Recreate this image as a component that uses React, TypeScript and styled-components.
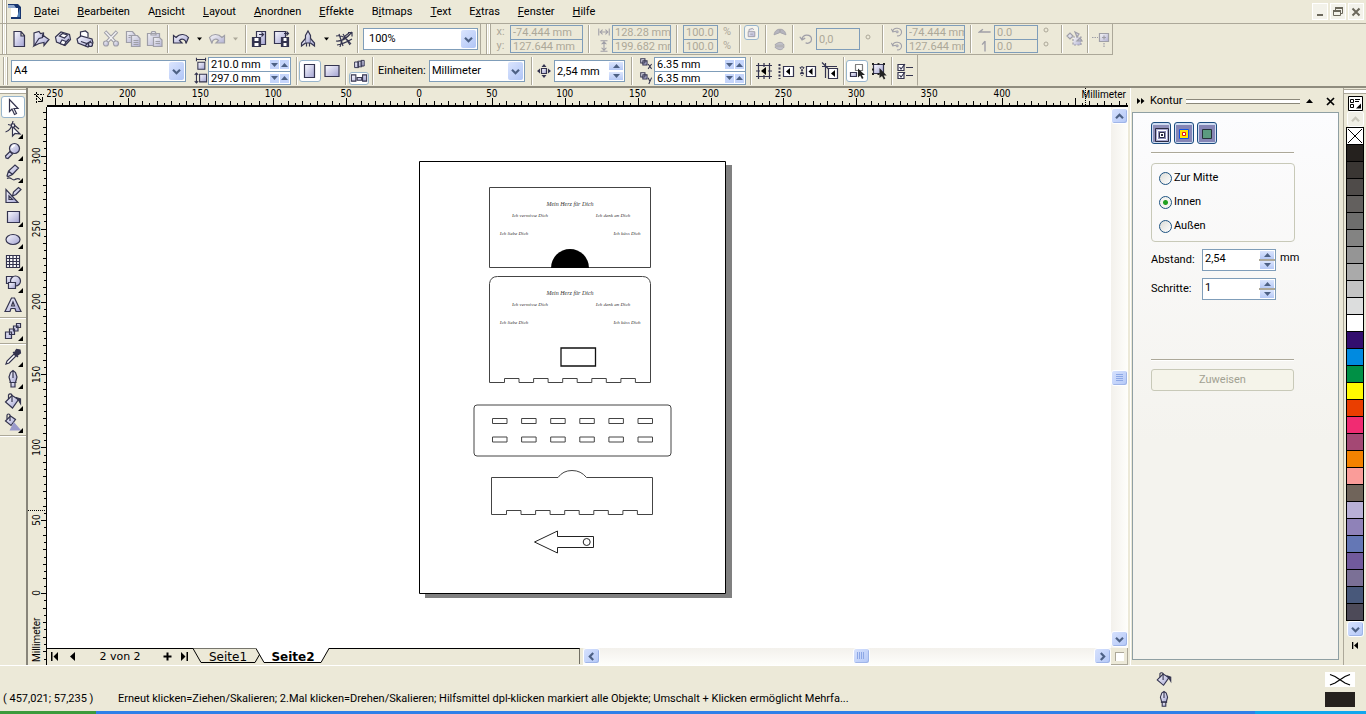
import React from "react";
import styled, { createGlobalStyle, css } from "styled-components";

const face = "#ece9d8";
const shade = "#aca899";
const fieldBorder = "#7f9db9";
const ui = 'Roboto, "Liberation Sans", sans-serif';

const GlobalStyle = createGlobalStyle`
  * { box-sizing: border-box; }
  body { margin: 0; background: ${face}; font: 11px/14px ${ui}; color: #000; }
  button, input, select { font: inherit; color: inherit; margin: 0; padding: 0; border: 0; background: none; min-width: 0; }
  svg { display: block; flex: none; }
  fieldset { margin: 0; padding: 0; min-width: 0; }
`;

/* ---------- shared parts ---------- */

const Window = styled.div`
  min-height: 100vh;
  display: flex;
  flex-direction: column;
  background: ${face};
  overflow: hidden;
`;

const Defs = styled.svg`
  position: absolute;
  width: 0;
  height: 0;
`;

const Bar = styled.div`
  display: flex;
  flex: none;
  height: 31px;
  background: ${face};
  white-space: nowrap;
`;

const Strip = styled.div<{ $bottom?: boolean }>`
  display: flex;
  align-items: center;
  flex: none;
  padding-top: ${(p) => (p.$bottom ? 0 : 2)}px;
  border-right: 1px solid ${shade};
  border-bottom: 1px solid ${(p) => (p.$bottom ? shade : "transparent")};
`;

const Grip = styled.div`
  width: 5px;
  flex: none;
  align-self: stretch;
  border-left: 1px solid ${shade};
  border-right: 1px solid ${shade};
  background: linear-gradient(90deg, #fff 1px, ${face} 1px, ${face} 2px, #fff 2px);
`;

const Sep = styled.div<{ $l?: number; $r?: number }>`
  width: 2px;
  height: 28px;
  flex: none;
  margin: 0 ${(p) => p.$r ?? 1}px 0 ${(p) => p.$l ?? 1}px;
  border-left: 1px solid ${shade};
  border-right: 1px solid #fff;
`;

const ToolButton = styled.button<{ $active?: boolean; $w?: number }>`
  position: relative;
  display: flex;
  align-items: center;
  justify-content: center;
  flex: none;
  width: ${(p) => p.$w ?? 22}px;
  height: 22px;
  ${(p) =>
    p.$active &&
    css`
      background: #fff;
      border: 1px solid #98b5cc;
      border-radius: 3px;
    `}
`;

const LockButton = styled(ToolButton)`
  height: 15px;
  background: #f6f5ee;
`;

const MiniButton = styled.button<{ $active?: boolean }>`
  display: flex;
  align-items: center;
  justify-content: center;
  width: ${(p) => (p.$active ? 20 : 18)}px;
  height: 13px;
  ${(p) =>
    p.$active &&
    css`
      background: #fff;
      border: 1px solid #98b5cc;
      border-radius: 3px;
    `}
`;

const Stack = styled.div<{ $w: number; $top?: boolean }>`
  display: flex;
  flex-direction: column;
  align-items: center;
  justify-content: ${(p) => (p.$top ? "flex-start" : "space-around")};
  flex: none;
  width: ${(p) => p.$w}px;
  height: 28px;
  color: ${shade};
`;

const FieldBox = styled.div<{ $w: number; $off?: boolean }>`
  flex: none;
  width: ${(p) => p.$w}px;
  border: 1px solid ${fieldBorder};
  background: ${(p) => (p.$off ? face : "#fff")};
  color: ${(p) => (p.$off ? shade : "#000")};
`;

const FieldRow = styled.div`
  display: flex;
  align-items: center;
  height: 13px;
  & + & {
    border-top: 1px solid ${fieldBorder};
  }
`;

const TextInput = styled.input<{ $up?: boolean }>`
  flex: 1;
  width: 100%;
  height: 100%;
  padding-left: 2px;
  padding-bottom: ${(p) => (p.$up ? 4 : 0)}px;
  outline: 0;
`;

const SpinSide = styled.button`
  display: flex;
  align-items: center;
  justify-content: center;
  width: 10px;
  height: 9px;
  background: #c5d5fb;
  border-right: 1px solid #fff;
`;

const SpinColumn = styled.div<{ $barred?: boolean }>`
  display: flex;
  flex-direction: column;
  justify-content: space-between;
  width: 16px;
  padding: 1px 1px;
  align-self: stretch;
  background: ${(p) => (p.$barred ? `linear-gradient(#fff 9px, ${shade} 9px, ${shade} 11px, #fff 11px)` : "#fff")};
`;

const SpinPart = styled.button`
  display: flex;
  align-items: center;
  justify-content: center;
  height: 8px;
  background: linear-gradient(#dbe5fd, #b6c9f6);
`;

const ComboBox = styled.div<{ $w: number }>`
  position: relative;
  flex: none;
  width: ${(p) => p.$w}px;
  height: 22px;
  border: 1px solid ${fieldBorder};
  background: #fff;
`;

const ComboSelect = styled.select<{ $pad: number }>`
  appearance: none;
  width: 100%;
  height: 100%;
  padding-left: ${(p) => p.$pad}px;
  outline: 0;
`;

const ComboArrow = styled.span`
  position: absolute;
  top: 1px;
  right: 1px;
  bottom: 1px;
  width: 15px;
  display: flex;
  align-items: center;
  justify-content: center;
  border-radius: 2px;
  background: linear-gradient(135deg, #dbe5fe, #b0c5f6);
  pointer-events: none;
`;

const Chevron = ({ dir = "down", color = "#4d6185" }: { dir?: "down" | "up" | "left" | "right"; color?: string }) => {
  const turn = { down: 0, left: 90, up: 180, right: 270 }[dir];
  return (
    <svg width="9" height="9" viewBox="0 0 9 9">
      <path d="M1 2.8 4.5 6.2 8 2.8" fill="none" stroke={color} strokeWidth="2.2" transform={`rotate(${turn} 4.5 4.5)`} />
    </svg>
  );
};

const Tri = ({ up, color = "#4d6185", w = 7 }: { up?: boolean; color?: string; w?: number }) => (
  <svg width={w} height="4" viewBox="0 0 7 4">
    <path d={up ? "M0 4 3.5 0 7 4z" : "M0 0 3.5 4 7 0z"} fill={color} />
  </svg>
);

function Combo({ w, label, value, id, pad = 2 }: { w: number; label: string; value: string; id?: string; pad?: number }) {
  return (
    <ComboBox $w={w}>
      <ComboSelect id={id} $pad={pad} aria-label={label} defaultValue={value}>
        <option>{value}</option>
      </ComboSelect>
      <ComboArrow>
        <Chevron />
      </ComboArrow>
    </ComboBox>
  );
}

function PairField({ w, off, items, spin }: { w: number; off?: boolean; spin?: boolean; items: [string, string][] }) {
  return (
    <FieldBox $w={w} $off={off}>
      {items.map(([label, value]) => (
        <FieldRow key={label}>
          <TextInput aria-label={label} defaultValue={value} disabled={off} />
          {spin && (
            <>
              <SpinSide aria-label={`${label} verringern`}>
                <Tri />
              </SpinSide>
              <SpinSide aria-label={`${label} erhöhen`}>
                <Tri up />
              </SpinSide>
            </>
          )}
        </FieldRow>
      ))}
    </FieldBox>
  );
}

/* ---------- icons ---------- */

const line = "#34344f";
const lav = "url(#lavender)";

const glyphs: Record<string, React.ReactNode> = {
  page: <path d="M5 2.500h7l3.500 4v11H5zM12 2.500v4.500h3.500" />,
  open: (
    <>
      <path d="M3 17V4l5-1.500 1.500 2 3-.5v4" />
      <path d="M3 17 8 9.500l3.500-1V6l6.500 4.500-5 6v-3L8 14.500z" />
    </>
  ),
  save: (
    <>
      <path d="M2.500 8 8 3l8.500 2.500 1 5-5.500 6L3.500 13z" />
      <path d="M6.500 7 9.500 4.500l5 1.500-3 3zM7 14.500l2-3.500 4 1.500-1.500 3.500z" fill="#fff" />
      <path d="M13 13l3-3" />
    </>
  ),
  print: (
    <>
      <path d="M5.500 8V3l5-1 2.500 2v4" fill="#fff" />
      <path d="M2 10l4-3 11 3 1 4-5 4-10-4z" />
      <path d="M6 12.500l6 2 4-2.500M10 17l3-3 4 2" />
      <circle cx="15.500" cy="15.500" r="2" />
    </>
  ),
  cut: (
    <>
      <path d="M4 2.500 14 13M16 2.500 6 13" strokeWidth="3.400" />
      <path d="M4.500 3 14 13M15.500 3 6 13" stroke="#f4f4fa" strokeWidth="1.400" />
      <circle cx="5" cy="14.500" r="2.500" />
      <circle cx="15" cy="14.500" r="2.500" />
    </>
  ),
  copy: (
    <>
      <path d="M3.500 2.500h6l2.500 3v8H3.500z" />
      <path d="M8.500 6.500h6l2.500 3v8H8.500zM10.500 11.500h5M10.500 13.500h5M10.500 15.500h5M5.500 6.500h3M5.500 8.500h2" />
    </>
  ),
  paste: (
    <>
      <path d="M2.500 4.500h12v12h-12zM6 4.500l1-2h3l1 2v1.500H6z" />
      <path d="M8.500 8.500h6l2.500 2.500v6.500H8.500zM10.500 12.500h4.500M10.500 14.500h4.500" />
    </>
  ),
  undo: <path d="M2.500 14V6.500L5 8.500C9 4 15 5 17.500 8.500L15 14.500c0-4-4-5.500-6.500-3l2.500 2.500z" />,
  redo: <path d="M17.500 14V6.500L15 8.500C11 4 5 5 2.500 8.500L5 14.500c0-4 4-5.500 6.500-3L9 14z" />,
  importer: (
    <>
      <path d="M7.500 2.500h9v13h-9z" />
      <path d="M3.500 8.500h8v9h-8z" fill="#34344f" />
      <path d="M5.500 9h4v3h-4zM5.500 14h4v3h-4z" fill="#fff" stroke="none" />
      <path d="M10 5.500h4.500M12.500 3.500l2 2-2 2" fill="none" />
    </>
  ),
  exporter: (
    <>
      <path d="M3.500 2.500h11v12h-11z" />
      <path d="M10.500 8.500h7v9h-7z" fill="#34344f" />
      <path d="M12.500 9h3v3h-3zM12.500 14h3v3h-3z" fill="#fff" stroke="none" />
      <path d="M13 4.500h4.500M15.500 2.500l2 2-2 2" fill="none" />
    </>
  ),
  rocket: (
    <>
      <path d="M7.500 14V6.500L10 2l2.500 4.500V14z" />
      <path d="M7.500 9.500 3.500 14v3l4-3M12.500 9.500l4 4.500v3l-4-3M8.500 14v3.500M11.500 14v3.500" />
    </>
  ),
  mesh: (
    <path
      d="M2 12c6 1 11-3 16-9M3 16c6-1 10-3 15-6M5 5l4 12M9 5l7 11M15 4c-5 3-8 8-9 14M2 7c5-1 10 1 15 8M14 3.500h4v4"
      fill="none"
    />
  ),
  width: <path d="M2.500 5v10M17.500 5v10M4 10h12M8 6.500 4.500 10 8 13.500M12 6.500l3.500 3.500-3.500 3.500" fill="none" strokeWidth="1.500" />,
  height: <path d="M5 2.500h10M5 17.500h10M10 4v12M6.500 7.500 10 4l3.500 3.500M6.500 12.500 10 16l3.500-3.500" fill="none" strokeWidth="1.500" />,
  lock: <path d="M4 8.500h12v9H4zM5.500 8.500v-4l6.500-2 2 2.500M7.500 13h5" strokeWidth="1.800" />,
  mirrorH: <path d="M1.500 14c1-6 5-8 8-8v5zM18.500 14c-1-6-5-8-8-8v5z" fill="#a9a9b8" />,
  mirrorV: <path d="M3 9h13c-3-6-8-5-13-1zM3 11h13c-3 6-8 5-13 1z" fill="#b9b9c6" />,
  rotate: <path d="M4.500 10.500C4.500 4 15 4.500 15 10.500c0 4-5 5-6.500 3.500M2 7.500l2.500 3.500 3.500-2" fill="none" strokeWidth="1.400" />,
  center: (
    <>
      <path d="M4 9C5 2.500 16 3.500 16.500 10c0 5-4 6-6.500 5.500M2 5.500 4 10l4.500-1" fill="none" strokeWidth="1.500" />
      <path d="M9 8.500h2.500V11H9z" />
    </>
  ),
  arrowH: <path d="M2 10h16M7 6 2 10h6" fill="none" strokeWidth="2" />,
  arrowV: <path d="M10 18V3M10 3 6 8" fill="none" strokeWidth="2" />,
  transform: (
    <>
      <path d="M8 8h8v8H8z" strokeDasharray="2 1.500" />
      <path d="M2 7l3-3 3 3-3 3zM10 3l4 2-2 3zM12 12l3-3 2 3z" />
    </>
  ),
  plusBox: (
    <>
      <path d="M8.500 4.500h9v8h-9zM13 6.500v4M11 8.500h4" />
      <path d="M1 8.500h6M13 14v5" strokeDasharray="1.500 1" />
    </>
  ),
  paperW: (
    <>
      <path d="M5.500 7.500h10v10h-10z" strokeWidth="1.500" />
      <path d="M3 3.500h14M3.500 1v5M16.500 1v5" strokeWidth="1.500" />
    </>
  ),
  paperH: (
    <>
      <path d="M8 4.500h10v11H8z" strokeWidth="1.500" />
      <path d="M3.500 3v14M1 5.500 3.500 3 6 5.500M1 14.500 3.500 17 6 14.500" fill="none" strokeWidth="1.500" />
    </>
  ),
  portrait: <path d="M4.500 3.500h10v13h-10z" />,
  landscape: <path d="M3 4.500h14v11H3z" />,
  pagesAll: <path d="M4.500 7.500h5v7h-5zM8.500 6.500h5v7h-5zM12.500 5.500h4v7h-4z" />,
  pagesOne: <path d="M1.500 6.500h5v7h-5zM8 9.500h5v3H8zM14 6.500h4.500v7H14z" />,
  nudge: (
    <>
      <path d="M7.500 7.500h5v5h-5z" />
      <path d="M10 3l2.500 3h-5zM10 17l2.500-3h-5zM3 10l3-2.500v5zM17 10l-3-2.500v5z" fill="#34344f" stroke="none" />
    </>
  ),
  dupX: (
    <>
      <path d="M2.500 2.500h6v6h-6zM5.500 5.500h6v6h-6z" strokeWidth="1.500" />
      <path d="M13 10l5 7M18 10l-5 7" strokeWidth="1.500" />
    </>
  ),
  dupY: (
    <>
      <path d="M2.500 2.500h6v6h-6zM5.500 5.500h6v6h-6z" strokeWidth="1.500" />
      <path d="M13 9.500l2.500 5M18 9.500l-4 9" strokeWidth="1.500" />
    </>
  ),
  grid: (
    <>
      <path d="M2 4.500h16M2 15.500h16M4.500 2v16M15.500 2v16M10 2v4M10 14v4M2 10h4M14 10h4" />
      <path d="M7 10l5-4v8z" fill="#000" stroke="none" />
    </>
  ),
  guides: (
    <>
      <path d="M3.500 3v15" strokeDasharray="2 1.500" strokeWidth="2" />
      <path d="M7.500 5.500h10v10h-10z" fill="#fff" />
      <path d="M10 10.500l4-3.500v7z" fill="#000" stroke="none" />
    </>
  ),
  objects: (
    <>
      <path d="M2 6l4 8M6 6l-4 8M4 5v10" strokeDasharray="2 1" />
      <path d="M8.500 5.500h9v10h-9z" fill="#fff" />
      <path d="M10.500 10.500l4-3.500v7z" fill="#000" stroke="none" />
    </>
  ),
  dynamic: (
    <>
      <path d="M2 5.500h15M5.500 2v15M2 1.500l7 7" />
      <path d="M8.500 7.500h9v10h-9z" fill="#fff" />
      <path d="M11 12.500l4-3.500v7z" fill="#000" stroke="none" />
    </>
  ),
  drawMove: (
    <>
      <path d="M8.500 3.500h7v6h-7z" fill="none" strokeDasharray="1 1" stroke="#000" />
      <path d="M3.500 11.500h6v4h-6z" />
      <path d="M11 7.500v9l2.200-2 1.800 3.500 1.500-1-1.600-3H18z" fill="#222" stroke="none" />
    </>
  ),
  treatAll: (
    <>
      <path d="M4.500 3.500h10v9h-10z" />
      <path d="M3 2h2v2H3zM8.500 2h2v2h-2zM14 2h2v2h-2zM3 7.500h2v2H3zM3 12h2v2H3zM8.500 12h2v2h-2z" fill="#222" stroke="none" />
      <path d="M10.500 7v10l2.500-2 1.800 3.500 1.500-1-1.600-3h3z" fill="#222" stroke="none" />
    </>
  ),
  options: (
    <>
      <path d="M3 3.500h6v6H3zM3 11.500h6v6H3zM11 6.500h7M11 14.500h7" fill="#fff" />
      <path d="M4.500 6l1.500 2 4-5M4.500 14l1.500 2 4-5" fill="none" />
    </>
  ),
  pick: <path d="M6.500 2.500v12l2.500-2.500 2.500 5.500 2-1-2.500-5h4z" fill="#fff" />,
  shape: (
    <>
      <path d="M10 2C9 8 7 12 2.500 13M9 6.500l-4-1M10 5l6 5" fill="none" />
      <path d="M9.500 7.500v9.500l2.500-2.500 5 .5z" fill="#fff" />
      <path d="M8.500 5h3v3h-3z" fill="#fff" />
    </>
  ),
  zoom: (
    <>
      <path d="M7 10.500 2.500 15l.5 2 2 .5 4.500-4.500z" />
      <circle cx="11.500" cy="7.500" r="5" />
      <path d="M9 7a3 3 0 0 1 3-2.500" stroke="#fff" strokeWidth="1.500" fill="none" />
    </>
  ),
  freehand: (
    <>
      <path d="M4 13l1.500-5L12 2l3.500 3-6 6.500L5 13.500zM5.500 8l4 3.500" />
      <path d="M4 15.500c4-3 5 3 8 1 2-1 3-2 5 0" fill="none" />
    </>
  ),
  smart: (
    <>
      <path d="M3 4.500v13h12z" />
      <path d="M6 11v3.500h3.500z" fill="#ece9d8" />
      <path d="M9.500 11l1-4 5-4.500 2.500 2-5 5z" />
    </>
  ),
  rect: <path d="M4.500 4.500h12v11h-12z" />,
  ellipse: <ellipse cx="10" cy="10.500" rx="7" ry="5" />,
  table: <path d="M3.500 4.500h13v12h-13zM3.500 7.500h13M3.500 10.500h13M3.500 13.500h13M6.500 4.500v12M10 4.500v12M13.500 4.500v12" fill="#fff" />,
  basic: (
    <>
      <path d="M3.500 3.500h7v7h-7z" />
      <circle cx="12.500" cy="8" r="5" />
      <path d="M5.500 9.500h7v6h-7z" />
    </>
  ),
  text: <path d="M2 16.500 8.500 3h3L18 16.500h-5l-1-3H8l-1 3zM8.500 11h3L10 7z" fillRule="evenodd" />,
  blend: <path d="M13.500 2.500h4v4h-4zM10.500 5h4.500v5h-4.500zM6.500 8h5v5.500h-5zM2.500 11h6v6.500h-6z" />,
  dropper: (
    <>
      <path d="M3 17l1-3 7-7 2 2-7 7z" fill="#fff" />
      <path d="M10 5l5 5M11 6.500l2.500-4 3.500.5.500 3-4 3z" fill="#34344f" />
    </>
  ),
  pen: (
    <>
      <path d="M7.500 13.500 6 8 7.500 3.500 10 1.500l2.500 2L14 8l-1.500 5.500zM10 2v7" />
      <path d="M6.500 13.500h7M8 14v4h4v-4" />
    </>
  ),
  bucket: (
    <>
      <path d="M2.500 11 9 4.500l6.500 4L9.500 17z" />
      <path d="M13 6.500l4.500 1.500v4.500L15.500 9z" fill="#34344f" />
      <path d="M9 11V4a2 2 0 0 0-3.500 0V8" fill="none" />
    </>
  ),
  interactive: (
    <>
      <path d="M2.500 8 7.500 3l5 3.500-4.500 6z" />
      <path d="M7 8V2.500a1.500 1.500 0 0 0-3 0V6" fill="none" />
      <path d="M11 10l-3.500 7H17z" fill="#9a9acb" stroke="#9a9acb" />
    </>
  ),
};

function Icon({ name, size = 20, off }: { name: string; size?: number; off?: boolean }) {
  return (
    <svg width={size} height={size} viewBox="0 0 20 20" fill={lav} stroke={off ? "#8d8d9c" : line} strokeWidth="1.2" opacity={off ? 0.8 : 1} aria-hidden="true">
      {glyphs[name]}
    </svg>
  );
}

/* ---------- menu ---------- */

const MenuBar = styled.nav`
  display: flex;
  align-items: center;
  height: 24px;
  flex: none;
  padding-left: 2px;
  border-bottom: 1px solid ${shade};
`;

const MenuList = styled.div`
  display: flex;
  flex: 1;
  gap: 18px;
  margin-left: 12px;
`;

const MenuItem = styled.button`
  height: 18px;
  white-space: nowrap;
`;

const WindowButton = styled.button`
  display: flex;
  align-items: center;
  justify-content: center;
  width: 16px;
  height: 17px;
  margin-right: 2px;
  background: #f3f2ea;
  border: 1px solid #fff;
`;

const menus = [
  ["", "D", "atei"],
  ["", "B", "earbeiten"],
  ["A", "n", "sicht"],
  ["", "L", "ayout"],
  ["", "A", "nordnen"],
  ["", "E", "ffekte"],
  ["B", "i", "tmaps"],
  ["", "T", "ext"],
  ["E", "x", "tras"],
  ["", "F", "enster"],
  ["", "H", "ilfe"],
];

function Menu() {
  return (
    <MenuBar>
      <Grip />
      <svg width="15" height="17" viewBox="0 0 15 17">
        <path d="M1 1h10l3 3v12H4V5H1z" fill="#17356f" />
        <path d="M4 5h7v9H4z" fill="#fff" />
        <path d="M1 2h6l2 3H1z" fill="#8fa8cf" />
        <path d="M10 14l3-9v9z" fill="#4f7fb5" />
      </svg>
      <MenuList>
        {menus.map(([a, b, c]) => (
          <MenuItem key={a + b + c}>
            {a}
            <u>{b}</u>
            {c}
          </MenuItem>
        ))}
      </MenuList>
      <WindowButton aria-label="Minimieren">
        <svg width="12" height="12" viewBox="0 0 12 12">
          <path d="M3 9h6" stroke="#6b685c" strokeWidth="2" />
        </svg>
      </WindowButton>
      <WindowButton aria-label="Wiederherstellen">
        <svg width="12" height="12" viewBox="0 0 12 12">
          <path d="M3.500 4V2.500h7v5H9M1.500 5h7v4.500h-7z" fill="none" stroke="#6b685c" />
          <path d="M3 2h8M1 5h8" stroke="#6b685c" strokeWidth="2" />
        </svg>
      </WindowButton>
      <WindowButton aria-label="Schließen">
        <svg width="12" height="12" viewBox="0 0 12 12">
          <path d="M2.500 2.500l7 7M9.500 2.500l-7 7" stroke="#6b685c" strokeWidth="2" />
        </svg>
      </WindowButton>
    </MenuBar>
  );
}

/* ---------- toolbars ---------- */

const Caption = styled.label`
  width: 51px;
  margin-left: 3px;
`;

const Spinner = styled.div<{ $w: number }>`
  display: flex;
  align-items: center;
  flex: none;
  width: ${(p) => p.$w}px;
  height: 22px;
  border: 1px solid ${fieldBorder};
  background: #fff;
`;

const Pad = styled.div<{ $w: number }>`
  flex: none;
  width: ${(p) => p.$w}px;
`;

const Degree = styled.svg`
  margin-bottom: 4px;
`;

const DegreeSign = () => (
  <Degree width="6" height="6" viewBox="0 0 6 6" aria-label="Grad">
    <circle cx="3" cy="3" r="2" fill="none" stroke={shade} />
  </Degree>
);

function Tool({ name, label, off, active }: { name: string; label: string; off?: boolean; active?: boolean }) {
  return (
    <ToolButton aria-label={label} $active={active} disabled={off}>
      <Icon name={name} off={off} />
    </ToolButton>
  );
}

function MoreArrow({ off, label }: { off?: boolean; label: string }) {
  return (
    <ToolButton $w={14} disabled={off} aria-label={label}>
      <Tri color={off ? shade : "#000"} w={5} />
    </ToolButton>
  );
}

const TallInput = styled(TextInput)`
  height: 20px;
`;

function StandardBar() {
  return (
    <Bar>
      <Strip $bottom>
        <Pad $w={2} />
        <Grip />
        <Pad $w={1} />
        <Tool name="page" label="Neu" />
        <Tool name="open" label="Öffnen" />
        <Tool name="save" label="Speichern" />
        <Tool name="print" label="Drucken" />
        <Sep />
        <Tool name="cut" label="Ausschneiden" off />
        <Tool name="copy" label="Kopieren" off />
        <Tool name="paste" label="Einfügen" off />
        <Sep />
        <Tool name="undo" label="Rückgängig" />
        <MoreArrow label="Rückgängig-Liste" />
        <Tool name="redo" label="Wiederherstellen" off />
        <MoreArrow off label="Wiederherstellen-Liste" />
        <Sep $l={3} />
        <Tool name="importer" label="Importieren" />
        <Tool name="exporter" label="Exportieren" />
        <Sep $l={2} />
        <Tool name="rocket" label="Programmstarter" />
        <MoreArrow label="Programmliste" />
        <Tool name="mesh" label="Corel Online" />
        <Sep $l={2} $r={4} />
        <Combo w={115} label="Zoomfaktor" value="100%" pad={5} />
        <Pad $w={2} />
      </Strip>
      <Strip $bottom>
        <Pad $w={5} />
        <Grip />
        <Stack $w={19}>
          <span>x:</span>
          <span>y:</span>
        </Stack>
        <PairField w={73} off items={[["x", "-74.444 mm"], ["y", "127.644 mm"]]} />
        <Sep $l={5} $r={6} />
        <Stack $w={16}>
          <Icon name="width" size={14} off />
          <Icon name="height" size={14} off />
        </Stack>
        <PairField w={59} off items={[["Breite", "128.28 mm"], ["Höhe", "199.682 mm"]]} />
        <Sep $l={5} $r={5} />
        <PairField w={35} off items={[["Skalierung x", "100.0"], ["Skalierung y", "100.0"]]} />
        <Stack $w={18}>
          <span>%</span>
          <span>%</span>
        </Stack>
        <Sep $l={3} />
        <Stack $w={19} $top>
          <LockButton $active $w={15} disabled aria-label="Seitenverhältnis sperren">
            <Icon name="lock" size={11} off />
          </LockButton>
        </Stack>
        <Sep $l={4} $r={3} />
        <Stack $w={19}>
          <Icon name="mirrorH" size={14} off />
          <Icon name="mirrorV" size={14} off />
        </Stack>
        <Sep $l={3} $r={4} />
        <Icon name="rotate" size={18} off />
        <FieldBox $w={44} $off>
          <TallInput aria-label="Drehwinkel" defaultValue="0,0" disabled />
        </FieldBox>
        <Stack $w={16}>
          <DegreeSign />
        </Stack>
        <Sep $l={6} $r={4} />
        <Stack $w={18}>
          <Icon name="center" size={14} off />
          <Icon name="center" size={14} off />
        </Stack>
        <PairField w={59} off items={[["Drehpunkt x", "-74.444 mm"], ["Drehpunkt y", "127.644 mm"]]} />
        <Sep $l={5} $r={4} />
        <Stack $w={18}>
          <Icon name="arrowH" size={14} off />
          <Icon name="arrowV" size={14} off />
        </Stack>
        <PairField w={44} off items={[["Neigung x", "0.0"], ["Neigung y", "0.0"]]} />
        <Stack $w={16}>
          <DegreeSign />
          <DegreeSign />
        </Stack>
        <Sep $l={7} />
        <Tool name="transform" label="Relativ" off />
        <Sep />
        <Tool name="plusBox" label="Auf Duplikat anwenden" off />
      </Strip>
    </Bar>
  );
}

function PropertyBar() {
  return (
    <Bar>
      <Strip>
        <Pad $w={3} />
        <Grip />
        <Pad $w={3} />
        <Combo w={175} label="Papiertyp" value="A4" />
        <Pad $w={7} />
        <Stack $w={15}>
          <Icon name="paperW" size={14} />
          <Icon name="paperH" size={14} />
        </Stack>
        <PairField w={83} spin items={[["Papierbreite", "210.0 mm"], ["Papierhöhe", "297.0 mm"]]} />
        <Sep $l={5} />
        <Tool name="portrait" label="Hochformat" active />
        <Tool name="landscape" label="Querformat" />
        <Sep $l={2} />
        <Stack $w={21}>
          <MiniButton aria-label="Für alle Seiten">
            <Icon name="pagesAll" size={16} />
          </MiniButton>
          <MiniButton $active aria-label="Für aktuelle Seite">
            <Icon name="pagesOne" size={18} />
          </MiniButton>
        </Stack>
        <Sep $l={3} />
        <Caption htmlFor="units">Einheiten:</Caption>
        <Combo w={96} id="units" label="Einheiten" value="Millimeter" />
        <Sep $l={6} />
        <Icon name="nudge" />
        <Spinner $w={71}>
          <TextInput aria-label="Verschiebung" defaultValue="2,54 mm" />
          <SpinColumn>
            <SpinPart aria-label="Verschiebung erhöhen">
              <Tri up />
            </SpinPart>
            <SpinPart aria-label="Verschiebung verringern">
              <Tri />
            </SpinPart>
          </SpinColumn>
        </Spinner>
        <Sep $l={6} $r={4} />
        <Stack $w={17}>
          <Icon name="dupX" size={14} />
          <Icon name="dupY" size={14} />
        </Stack>
        <PairField w={92} spin items={[["Duplikat x", "6.35 mm"], ["Duplikat y", "6.35 mm"]]} />
        <Sep $l={4} />
        <Tool name="grid" label="Am Gitter ausrichten" />
        <Tool name="guides" label="An Hilfslinien ausrichten" />
        <Tool name="objects" label="An Objekten ausrichten" />
        <Tool name="dynamic" label="Dynamische Hilfslinien" />
        <Sep $l={2} />
        <Tool name="drawMove" label="Beim Verschieben zeichnen" active />
        <Tool name="treatAll" label="Als gefüllt behandeln" />
        <Sep />
        <Tool name="options" label="Optionen" />
        <Pad $w={1} />
      </Strip>
    </Bar>
  );
}

/* ---------- toolbox ---------- */

const Main = styled.main`
  display: flex;
  flex: 1;
  border-top: 2px solid #8f8c7e;
  border-bottom: 1px solid #fff;
`;

const ToolBox = styled.div`
  display: flex;
  flex-direction: column;
  align-items: center;
  flex: none;
  width: 28px;
  border-right: 2px solid #88857a;
`;

const TopGrip = styled.div`
  width: 100%;
  height: 5px;
  margin: 1px 0 2px;
  flex: none;
  border-top: 1px solid ${shade};
  border-bottom: 1px solid ${shade};
  background: #fff;
`;

const Rule = styled.div`
  flex: none;
  width: 100%;
  height: 2px;
  margin: 1px 0;
  border-top: 1px solid ${shade};
  border-bottom: 1px solid #fff;
`;

const Flyout = styled.svg`
  position: absolute;
  right: 1px;
  bottom: 1px;
`;

const tools: [string, string, boolean][] = [
  ["pick", "Auswahl", false],
  ["shape", "Form", true],
  ["zoom", "Zoom", true],
  ["freehand", "Freihand", true],
  ["smart", "Intelligentes Zeichnen", false],
  ["rect", "Rechteck", true],
  ["ellipse", "Ellipse", true],
  ["table", "Gitterpapier", true],
  ["basic", "Standardformen", true],
  ["text", "Text", false],
  ["blend", "Überblendung", true],
  ["dropper", "Pipette", true],
  ["pen", "Umriss", true],
  ["bucket", "Füllung", true],
  ["interactive", "Interaktive Füllung", true],
];

function Tools() {
  return (
    <ToolBox>
      <TopGrip />
      {tools.map(([name, label, more], i) => (
        <React.Fragment key={name}>
          {(name === "blend" || name === "dropper") && <Rule />}
          <ToolButton aria-label={label} $active={i === 0} $w={i === 0 ? 24 : 22}>
            <Icon name={name} />
            {more && (
              <Flyout width="5" height="5" viewBox="0 0 5 5">
                <path d="M5 0v5H0z" />
              </Flyout>
            )}
          </ToolButton>
        </React.Fragment>
      ))}
      <Rule />
    </ToolBox>
  );
}

/* ---------- work area ---------- */

const WorkArea = styled.section`
  display: grid;
  flex: 1;
  min-width: 0;
  grid-template-columns: 19px minmax(0, 1fr) 17px;
  grid-template-rows: 19px minmax(500px, 1fr) 17px;
`;

const RulerTop = styled.div`
  grid-column: 2 / 4;
  display: flex;
  overflow: hidden;
  border-bottom: 2px solid #000;
`;

const RulerCorner = styled.div`
  display: flex;
  align-items: center;
  justify-content: flex-end;
  padding-right: 3px;
`;

const RulerSide = styled.div`
  grid-row: 2 / 4;
  display: flex;
  min-height: 0;
  overflow: hidden;
  border-right: 1px solid #000;
`;

const RulerText = styled.text`
  font: 10px "DejaVu Sans Condensed", ${ui};
`;

const UnitText = styled.text`
  font: 10px ${ui};
`;

const SCALE = 1.4575;

function HorizontalRuler() {
  const zero = 372;
  const ticks = [];
  for (let mm = -250; mm <= 485; mm += 5) {
    const x = Math.round(zero + mm * SCALE) + 0.5;
    const h = mm % 50 === 0 ? 7 : mm % 10 === 0 ? 4 : 2;
    ticks.push(<path key={mm} d={`M${x} ${17 - h}v${h}`} stroke="#000" />);
  }
  return (
    <svg width="1081" height="17" viewBox="0 0 1081 17">
      {ticks}
      {[-250, -200, -150, -100, -50, 0, 50, 100, 150, 200, 250, 300, 350, 400].map((mm) => (
        <RulerText key={mm} x={zero + mm * SCALE} y="9" textAnchor="middle">
          {Math.abs(mm)}
        </RulerText>
      ))}
      <UnitText x="1079" y="10" textAnchor="end">
        Millimeter
      </UnitText>
      <path d="M1038.500 0v17" stroke="#000" strokeDasharray="1 1" />
    </svg>
  );
}

function VerticalRuler() {
  const zero = 486;
  const ticks = [];
  for (let mm = 330; mm >= -45; mm -= 5) {
    const y = Math.round(zero - mm * SCALE) + 0.5;
    const w = mm % 50 === 0 ? 5 : mm % 10 === 0 ? 3 : 2;
    ticks.push(<path key={mm} d={`M${18 - w} ${y}h${w}`} stroke="#000" />);
  }
  return (
    <svg width="18" height="558" viewBox="0 0 18 558">
      {ticks}
      {[300, 250, 200, 150, 100, 50, 0].map((mm) => (
        <RulerText key={mm} transform={`translate(12 ${zero - mm * SCALE}) rotate(-90)`} textAnchor="middle">
          {mm}
        </RulerText>
      ))}
      <UnitText transform="translate(12 555) rotate(-90)">Millimeter</UnitText>
      <path d="M0 403.500h18" stroke="#000" strokeDasharray="1 1" />
    </svg>
  );
}

const Canvas = styled.div`
  padding: 54px 0 0 372px;
  background: #fff;
  overflow: hidden;
`;

const Script = styled.text<{ $size: number }>`
  font: italic ${(p) => p.$size}px "Liberation Serif", serif;
  fill: #333;
  text-anchor: middle;
`;

const phrases: [string, number, number, number][] = [
  ["Mein Herz für Dich", 570, 206, 6],
  ["Ich vermisse Dich", 530, 217, 5],
  ["Ich denk an Dich", 613, 217, 5],
  ["Ich liebe Dich", 514, 235, 5],
  ["Ich küss Dich", 627, 235, 5],
];

function teeth(left: number, bottom: number, top: number) {
  let d = `M${left} ${bottom}`;
  for (let i = 0; i < 5; i++) {
    const x = left + 15 + i * 29.1;
    d += `H${x}V${top}H${x + 14.5}V${bottom}`;
  }
  return d + `H${left + 161}`;
}

function Drawing() {
  const slots = [0, 1, 2, 3, 4, 5];
  return (
    <svg width="314" height="438" viewBox="419 161 314 438">
      <path d="M425 165h307v433H425z" fill="#808080" />
      <path d="M419.500 161.500h306v432h-306z" fill="#fff" stroke="#000" />
      <g fill="none" stroke="#444" strokeWidth="1">
        <path d="M489.500 187.500h161v80h-161z" />
        <path d={`${teeth(489.5, 382.5, 378.5)}V283.500q-1-7-8-7H497.500q-7 0-8 7V382.500`} />
        <rect x="474" y="405" width="197" height="51" rx="3" />
        {slots.map((i) => (
          <path key={i} d={`M${492.5 + i * 29.1} 418.500h14.500v5h-14.500zM${492.5 + i * 29.1} 437h14.500v5h-14.500z`} />
        ))}
        <path d={`${teeth(491.5, 514.5, 510.5)}V477.500H586.500Q581 470.500 572 470.500T558 477.500H491.500V514.500`} />
        <path d="M534.500 542 557.500 531v5.500h36v11h-36v5.500z" stroke="#222" />
        <circle cx="586.700" cy="542" r="3.500" stroke="#222" />
      </g>
      <path d="M561 348h34.500v18H561z" fill="none" stroke="#111" strokeWidth="1.300" />
      <path d="M551 268a19 19 0 0 1 38 0z" />
      {[0, 89].map((dy) =>
        phrases.map(([text, x, y, size]) => (
          <Script key={text + dy} x={x} y={y + dy} $size={size}>
            {text}
          </Script>
        ))
      )}
    </svg>
  );
}

const ScrollV = styled.div`
  display: flex;
  flex-direction: column;
  justify-content: space-between;
  padding: 1px 0;
  background: linear-gradient(90deg, #f3f1ec, #fefefb);
`;

const ScrollH = styled.div`
  display: flex;
  flex: 1;
  margin-left: 3px;
  background: linear-gradient(#f3f1ec, #fefefb);
`;

const ScrollButton = styled.button`
  display: flex;
  align-items: center;
  justify-content: center;
  flex: none;
  width: 17px;
  height: 16px;
  border: 1px solid #fff;
  border-radius: 3px;
  background: linear-gradient(135deg, #d6e1fd, #b4c8f7);
  box-shadow: inset -1px -1px #9fb5e8;
`;

const Track = styled.div<{ $grow: number }>`
  flex: ${(p) => p.$grow} 1 0;
`;

const BottomBar = styled.div`
  display: flex;
  min-width: 0;
`;

const PageNav = styled.div`
  position: relative;
  display: flex;
  align-items: center;
  flex: none;
  width: 533px;
  height: 16px;
  border-top: 1px solid #000;
  border-right: 1px solid #716f64;
`;

const NavButton = styled.button<{ $w: number }>`
  display: flex;
  align-items: center;
  justify-content: center;
  width: ${(p) => p.$w}px;
  height: 15px;
`;

const PageCount = styled.span`
  width: 78px;
  font-family: "DejaVu Sans", sans-serif;
  text-align: center;
`;

const PageTab = styled.button<{ $w: number; $current?: boolean }>`
  position: relative;
  width: ${(p) => p.$w}px;
  height: 15px;
  margin-right: -7px;
  font-family: "DejaVu Sans", sans-serif;
  font-size: 12px;
  line-height: 14px;
  font-weight: ${(p) => (p.$current ? "bold" : "normal")};
  z-index: ${(p) => (p.$current ? 1 : 0)};
`;

const TabShape = styled.svg`
  position: absolute;
  left: 0;
  top: -1px;
  z-index: -1;
`;

const Corner = styled.div`
  display: flex;
  align-items: center;
  justify-content: center;
  border-right: 1px solid ${shade};
  border-bottom: 1px solid ${shade};
`;

const CornerBox = styled.button`
  width: 9px;
  height: 9px;
  background: #fff;
  border-top: 1px solid ${shade};
  border-left: 1px solid ${shade};
`;

function Workspace() {
  return (
    <WorkArea>
      <RulerCorner>
        <svg width="10" height="11" viewBox="0 0 10 11" fill="none" stroke="#000">
          <path d="M0 2.500h10M2.500 0v11" strokeDasharray="2 1" />
          <path d="M3 4l4.500 4.500M8.500 5v4.500H4" />
        </svg>
      </RulerCorner>
      <RulerTop>
        <HorizontalRuler />
      </RulerTop>
      <RulerSide>
        <VerticalRuler />
      </RulerSide>
      <Canvas>
        <Drawing />
      </Canvas>
      <ScrollV>
        <ScrollButton aria-label="Nach oben">
          <Chevron dir="up" />
        </ScrollButton>
        <ScrollButton aria-label="Vertikale Position">
          <svg width="8" height="8" viewBox="0 0 8 8">
            <path d="M0 .5h7M0 2.500h7M0 4.500h7M0 6.500h7" stroke="#8da8e6" />
          </svg>
        </ScrollButton>
        <ScrollButton aria-label="Nach unten">
          <Chevron />
        </ScrollButton>
      </ScrollV>
      <BottomBar>
        <PageNav>
          <NavButton $w={16} aria-label="Erste Seite">
            <svg width="8" height="9" viewBox="0 0 8 9">
              <path d="M0 0h1.500v9H0zM7 0v9L2.500 4.500z" />
            </svg>
          </NavButton>
          <NavButton $w={18} aria-label="Vorige Seite">
            <svg width="5" height="9" viewBox="0 0 5 9">
              <path d="M5 0v9L0 4.500z" />
            </svg>
          </NavButton>
          <PageCount>2 von 2</PageCount>
          <NavButton $w={16} aria-label="Seite hinzufügen">
            <svg width="9" height="9" viewBox="0 0 9 9">
              <path d="M4.500 .5v8M.5 4.500h8" stroke="#000" strokeWidth="2" />
            </svg>
          </NavButton>
          <NavButton $w={18} aria-label="Letzte Seite">
            <svg width="8" height="9" viewBox="0 0 8 9">
              <path d="M8 0H6.500v9H8zM1 0v9l4.500-4.500z" />
            </svg>
          </NavButton>
          <PageTab $w={70}>
            <TabShape width="70" height="16" viewBox="0 0 70 16">
              <path d="M0 .5 8 14.500h54l8-14" fill={face} stroke="#000" />
            </TabShape>
            Seite1
          </PageTab>
          <PageTab $w={74} $current>
            <TabShape width="74" height="16" viewBox="0 0 74 16">
              <path d="M0 0 8 14.500h57L73 0z" fill="#fff" />
              <path d="M0 .5 8 14.500h57l8-14" fill="none" stroke="#000" />
            </TabShape>
            Seite2
          </PageTab>
        </PageNav>
        <ScrollH>
          <ScrollButton aria-label="Nach links">
            <Chevron dir="left" />
          </ScrollButton>
          <Track $grow={254} />
          <ScrollButton aria-label="Horizontale Position">
            <svg width="8" height="8" viewBox="0 0 8 8">
              <path d="M.5 0v7M2.500 0v7M4.500 0v7M6.500 0v7" stroke="#8da8e6" />
            </svg>
          </ScrollButton>
          <Track $grow={225} />
          <ScrollButton aria-label="Nach rechts">
            <Chevron dir="right" />
          </ScrollButton>
        </ScrollH>
      </BottomBar>
      <Corner>
        <CornerBox aria-label="Navigator" />
      </Corner>
    </WorkArea>
  );
}

/* ---------- docker ---------- */

const Docker = styled.aside`
  display: flex;
  flex-direction: column;
  flex: none;
  width: 214px;
  margin-left: 2px;
  padding: 0 4px 5px 1px;
  border-left: 1px solid #fff;
  border-right: 1px solid ${shade};
`;

const DockerHead = styled.header`
  display: flex;
  align-items: center;
  height: 24px;
  padding: 2px 0 0 5px;
`;

const DockerTitle = styled.h2`
  margin: 0 3px 0 5px;
  font: inherit;
`;

const DockerLines = styled.div`
  flex: 1;
  height: 5px;
  border-top: 1px solid #8b887b;
  border-bottom: 1px solid #8b887b;
  background: #fff;
`;

const HeadButton = styled.button`
  width: 18px;
  height: 16px;
  display: flex;
  align-items: center;
  justify-content: center;
`;

const DockerBody = styled.form`
  flex: 1;
  padding: 9px 44px 0 18px;
  border: 1px solid #8f9fa3;
  background: linear-gradient(#fcfcfe, #f4f3ee 60%);
`;

const Modes = styled.div`
  display: flex;
  gap: 3px;
`;

const ModeButton = styled.button`
  display: flex;
  align-items: center;
  justify-content: center;
  width: 20px;
  height: 22px;
  border: 1px solid #1d4d80;
  border-radius: 3px;
  background: #cfdcf2;
`;

const Divider = styled.hr`
  margin: 8px 0 9px;
  border: 0;
  border-top: 1px solid ${shade};
  border-bottom: 1px solid #fff;
`;

const Options = styled.fieldset`
  display: flex;
  flex-direction: column;
  gap: 10px;
  width: 144px;
  height: 79px;
  padding: 7px 7px 0;
  border: 1px solid #c8c9b8;
  border-radius: 4px;
`;

const Radio = styled.label`
  display: flex;
  align-items: center;
  gap: 2px;
`;

const RadioDot = styled.input`
  appearance: none;
  width: 13px;
  height: 13px;
  border: 1px solid #1d5281;
  border-radius: 50%;
  background: linear-gradient(135deg, #dcdcd7, #fff);
  &:checked {
    background: radial-gradient(circle, #21a121 0 2px, #f4f4f0 3px);
  }
`;

const ValueRow = styled.div`
  display: grid;
  grid-template-columns: 50px 74px 1fr;
  column-gap: 1px;
  align-items: center;
  margin-top: 7px;
`;

const Suffix = styled.span`
  padding: 0 0 4px 3px;
`;

const Apply = styled.button`
  display: block;
  width: 100%;
  height: 22px;
  border: 1px solid #c8c9b8;
  border-radius: 3px;
  background: #f5f4ea;
  color: #a1a192;
`;

const LowerDivider = styled(Divider)`
  margin: 59px 0 8px;
`;

function ValueSpinner({ id, value }: { id: string; value: string }) {
  return (
    <Spinner $w={74}>
      <TextInput id={id} defaultValue={value} $up />
      <SpinColumn $barred>
        <SpinPart type="button" aria-label="Erhöhen">
          <Tri up />
        </SpinPart>
        <SpinPart type="button" aria-label="Verringern">
          <Tri />
        </SpinPart>
      </SpinColumn>
    </Spinner>
  );
}

function Contour() {
  return (
    <Docker>
      <DockerHead>
        <svg width="8" height="7" viewBox="0 0 8 7">
          <path d="M0 0v6l3.500-3zM4 0v6l3.500-3z" />
        </svg>
        <DockerTitle>Kontur</DockerTitle>
        <DockerLines />
        <HeadButton aria-label="Einklappen">
          <Tri up color="#000" />
        </HeadButton>
        <Pad $w={3} />
        <HeadButton aria-label="Schließen">
          <svg width="9" height="9" viewBox="0 0 9 9">
            <path d="M1 1l7 7M8 1 1 8" stroke="#000" strokeWidth="1.700" />
          </svg>
        </HeadButton>
      </DockerHead>
      <DockerBody>
        <Modes>
          <ModeButton type="button" aria-label="Konturstufen">
            <svg width="16" height="17" viewBox="0 0 16 17" fill="#8e8eb8" stroke="#2c2c44">
              <path d="M0 0h16v17H0z" stroke="none" />
              <path d="M2.500 3.500h13v13h-13z" fill="#a9a9d0" />
              <path d="M4.500 5.500h9v9h-9z" stroke="#fff" />
              <path d="M6.500 7.500h5v5h-5z" fill="#fff" />
              <path d="M8 9h2v2H8z" fill="#2c2c44" stroke="none" />
            </svg>
          </ModeButton>
          <ModeButton type="button" aria-label="Konturfarbe">
            <svg width="16" height="17" viewBox="0 0 16 17">
              <path d="M0 0h16v17H0z" fill="#8585b5" />
              <path d="M3.500 4.500h9v9h-9z" fill="#ffe500" stroke="#1450e0" />
              <path d="M6.500 7.500h3v3h-3z" fill="#fff" stroke="#e01616" />
            </svg>
          </ModeButton>
          <ModeButton type="button" aria-label="Farbbeschleunigung">
            <svg width="16" height="17" viewBox="0 0 16 17">
              <path d="M0 0h16v17H0z" fill="#8585b5" />
              <path d="M3.500 4.500h9v9h-9z" fill="#5b9a80" stroke="#26323a" />
            </svg>
          </ModeButton>
        </Modes>
        <Divider />
        <Options aria-label="Richtung">
          <Radio>
            <RadioDot type="radio" name="direction" /> Zur Mitte
          </Radio>
          <Radio>
            <RadioDot type="radio" name="direction" defaultChecked /> Innen
          </Radio>
          <Radio>
            <RadioDot type="radio" name="direction" /> Außen
          </Radio>
        </Options>
        <ValueRow>
          <label htmlFor="offset">Abstand:</label>
          <ValueSpinner id="offset" value="2,54" />
          <Suffix>mm</Suffix>
        </ValueRow>
        <ValueRow>
          <label htmlFor="steps">Schritte:</label>
          <ValueSpinner id="steps" value="1" />
        </ValueRow>
        <LowerDivider />
        <Apply type="button" disabled>
          Zuweisen
        </Apply>
      </DockerBody>
    </Docker>
  );
}

/* ---------- palette ---------- */

const Palette = styled.aside`
  display: flex;
  flex-direction: column;
  align-items: center;
  flex: none;
  width: 22px;
`;

const PaletteTop = styled.button`
  width: 15px;
  height: 15px;
`;

const Swatches = styled.div`
  width: 18px;
  background: #000;
  padding: 0 1px 1px;
`;

const Swatch = styled.button<{ $c: string }>`
  display: block;
  width: 16px;
  height: 16px;
  margin-top: 1px;
  background: ${(p) => p.$c};
`;

const FadedButton = styled(ScrollButton)`
  background: #f0efe6;
  box-shadow: none;
`;

const EndButton = styled.button`
  height: 17px;
`;

const colours = [
  "#25211e", "#3a3633", "#4f4b49", "#63605e", "#6e6e6d", "#838382", "#959595", "#aaaaaa", "#c4c4c4", "#dcdddd",
  "#ffffff", "#330e6e", "#008ae0", "#009045", "#fffa00", "#ea3e00", "#f12b72", "#a44874", "#f38200", "#fa9c99",
  "#70645a", "#b9b0d6", "#8f82b8", "#6477b5", "#715a9c", "#7b7096", "#48587a", "#4d4a58",
];

function ColourPalette() {
  return (
    <Palette>
      <TopGrip />
      <PaletteTop aria-label="Palettenmenü">
        <svg width="15" height="15" viewBox="0 0 15 15" fill="none" stroke="#000">
          <path d="M.5.5h14v14H.5zM2.500 3.500h3v3h-3zM2.500 8.500h3v3h-3zM7 3.500h5M7 5.500h4" fill="#fff" />
          <path d="M8 12.500h5v-5z" fill="#000" stroke="none" />
        </svg>
      </PaletteTop>
      <FadedButton aria-label="Farben nach oben">
        <Chevron dir="up" color="#c9c7ba" />
      </FadedButton>
      <Swatches>
        <Swatch $c="#fff" aria-label="Keine Farbe">
          <svg width="16" height="16" viewBox="0 0 16 16">
            <path d="M1 1l14 14M15 1 1 15" stroke="#000" />
          </svg>
        </Swatch>
        {colours.map((c) => (
          <Swatch key={c} $c={c} aria-label={`Farbe ${c}`} />
        ))}
      </Swatches>
      <ScrollButton aria-label="Farben nach unten">
        <Chevron />
      </ScrollButton>
      <EndButton aria-label="Palette erweitern">
        <svg width="6" height="7" viewBox="0 0 6 7">
          <path d="M0 0h1.300v7H0zM6 0v7L2 3.500z" />
        </svg>
      </EndButton>
    </Palette>
  );
}

/* ---------- status ---------- */

const Status = styled.footer`
  display: grid;
  grid-template-columns: 115px minmax(0, 1fr) 20px 150px 30px;
  grid-template-rows: 20px 20px;
  align-items: center;
  flex: none;
  height: 45px;
  padding: 3px 11px 0 3px;
  white-space: nowrap;
`;

const StatusText = styled.span<{ $col: number }>`
  grid-row: 2;
  grid-column: ${(p) => p.$col};
`;

const StatusIcon = styled.span<{ $row: number }>`
  grid-column: 3;
  grid-row: ${(p) => p.$row};
`;

const StatusSwatch = styled.span<{ $row: number; $c: string }>`
  grid-column: 5;
  grid-row: ${(p) => p.$row};
  height: 15px;
  background: ${(p) => p.$c};
`;

const TaskEdge = styled.div`
  display: grid;
  grid-template-columns: 96px 1fr 111px;
  height: 3px;
  flex: none;
`;

const EdgePart = styled.div<{ $c: string }>`
  background: ${(p) => p.$c};
`;

export default function App() {
  return (
    <Window>
      <GlobalStyle />
      <Defs aria-hidden="true">
        <linearGradient id="lavender" x1="0" y1="0" x2="1" y2="1">
          <stop offset="0" stopColor="#fbfbff" />
          <stop offset="1" stopColor="#a3a3d2" />
        </linearGradient>
      </Defs>
      <Menu />
      <StandardBar />
      <PropertyBar />
      <Main>
        <Tools />
        <Workspace />
        <Contour />
        <ColourPalette />
      </Main>
      <Status>
        <StatusText $col={1}>( 457,021; 57,235 )</StatusText>
        <StatusText $col={2}>
          Erneut klicken=Ziehen/Skalieren; 2.Mal klicken=Drehen/Skalieren; Hilfsmittel dpl-klicken markiert alle Objekte; Umschalt +
          Klicken ermöglicht Mehrfa...
        </StatusText>
        <StatusIcon $row={1}>
          <Icon name="bucket" size={18} />
        </StatusIcon>
        <StatusIcon $row={2}>
          <Icon name="pen" size={18} />
        </StatusIcon>
        <StatusSwatch $row={1} $c="#fff">
          <svg width="30" height="15" viewBox="0 0 30 15">
            <path d="M5 2.500 10 4.500 20 11l5 2M25 2.500 20 4.500 10 11l-5 2" fill="none" stroke="#000" strokeWidth="1.200" />
          </svg>
        </StatusSwatch>
        <StatusSwatch $row={2} $c="#25211e" />
      </Status>
      <TaskEdge>
        <EdgePart $c="#3c9a3c" />
        <EdgePart $c="#2f7fe8" />
        <EdgePart $c="#12a6ee" />
      </TaskEdge>
    </Window>
  );
}
